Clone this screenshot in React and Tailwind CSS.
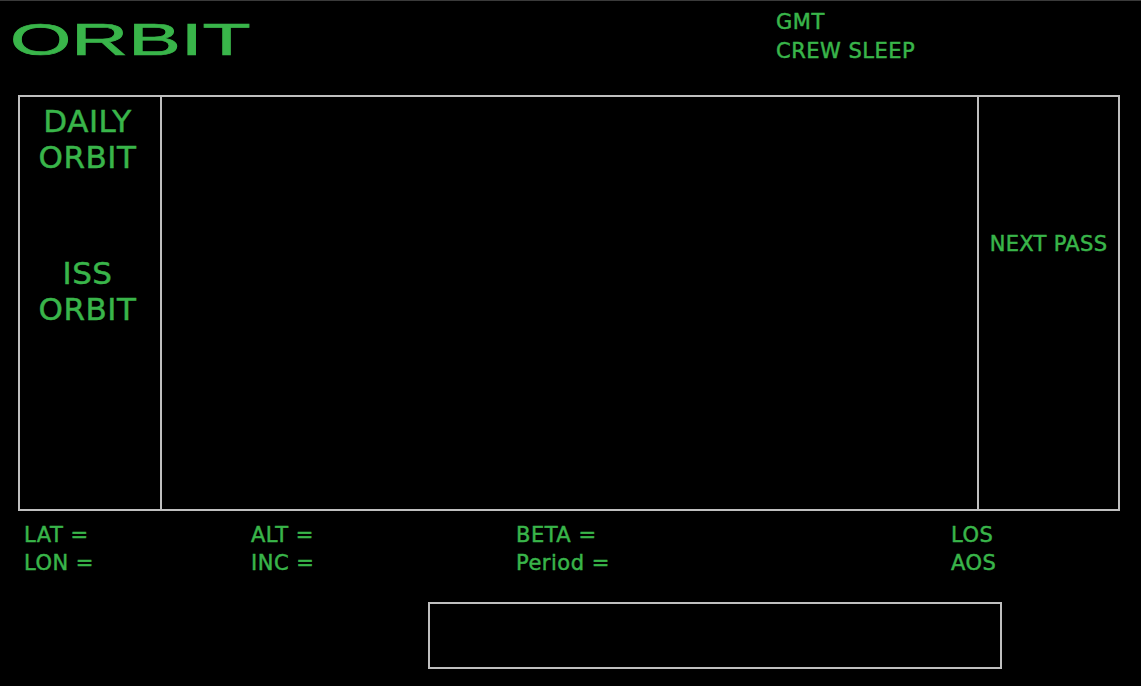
const Label = ({ children }) => <p className="whitespace-nowrap">{children}</p>;

export default function App() {
  return (
    <div className="relative h-[686px] w-[1141px] overflow-hidden border-t border-[#3a3a3a] bg-black font-['DejaVu_Sans',sans-serif] tracking-[0.5px] text-[#39b54a] [-webkit-text-stroke:0.5px_#39b54a]">
      {/* header */}
      <header className="flex h-[94px] items-start">
        <div className="w-[776px] pl-[10px] pt-[16px]">
          <h1 className="inline-block origin-left scale-x-[1.75] font-['Liberation_Sans',Arial,sans-serif] text-[45px] leading-none tracking-normal [-webkit-text-stroke:0.7px_#39b54a]">
            ORBIT
          </h1>
        </div>
        <div className="pt-[7px] text-[21px] leading-[29px]">
          <p>GMT</p>
          <p>CREW SLEEP</p>
        </div>
      </header>

      {/* main panel */}
      <section className="ml-[18px] flex h-[416px] w-[1102px] border-2 border-[#bfbfbf]">
        <div className="flex w-[142px] flex-col items-center border-r-2 border-[#bfbfbf] pr-[5px] pt-[6px] text-center text-[31px] leading-[36px]">
          <p>
            DAILY
            <br />
            ORBIT
          </p>
          <p className="mt-[80px]">
            ISS
            <br />
            ORBIT
          </p>
        </div>
        <div className="flex-1" />
        <div className="w-[141px] whitespace-nowrap border-l-2 border-[#bfbfbf] pt-[133px] text-center text-[21px] leading-[29px] tracking-[0.3px]">
          NEXT PASS
        </div>
      </section>

      {/* readouts */}
      <section className="mt-[10px] flex pl-[24px] text-[21px] leading-[28px]">
        <div className="w-[227px]">
          <Label>LAT =</Label>
          <Label>LON =</Label>
        </div>
        <div className="w-[265px]">
          <Label>ALT =</Label>
          <Label>INC =</Label>
        </div>
        <div className="w-[435px]">
          <Label>BETA =</Label>
          <Label>Period =</Label>
        </div>
        <div>
          <Label>LOS</Label>
          <Label>AOS</Label>
        </div>
      </section>

      <div className="ml-[428px] mt-[25px] h-[67px] w-[574px] border-2 border-[#bfbfbf]" />
    </div>
  );
}
